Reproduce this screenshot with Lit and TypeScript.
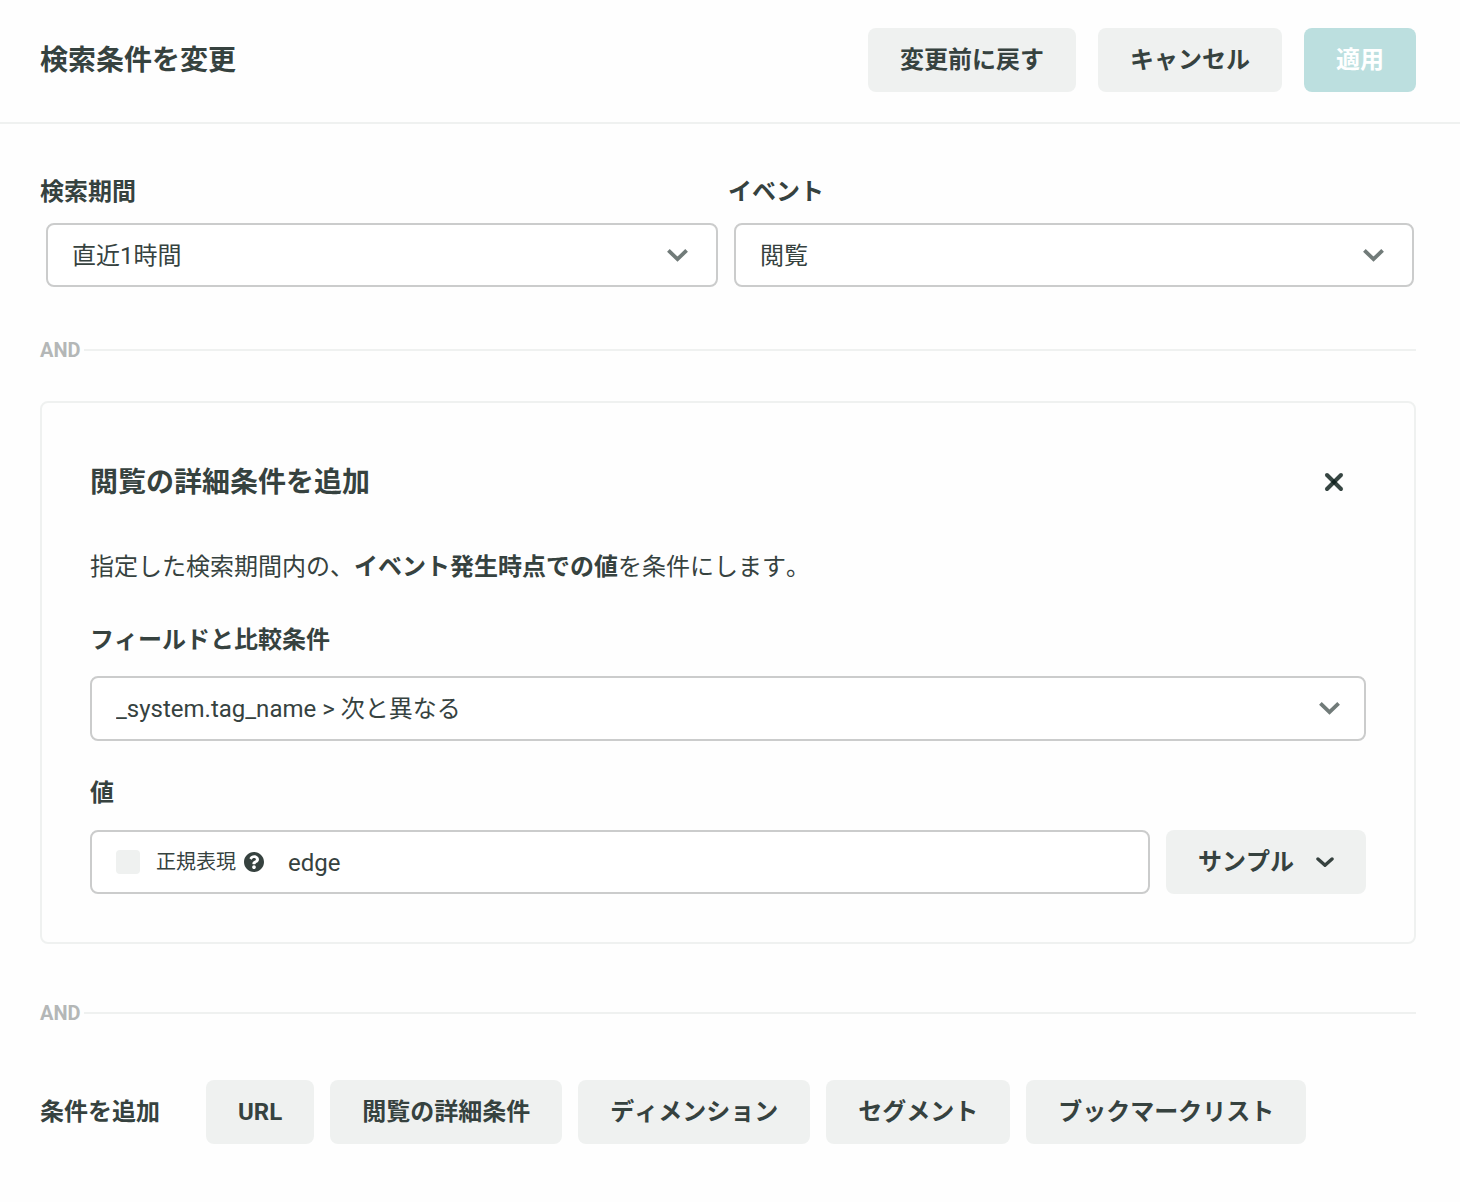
import { LitElement, html, css, svg } from "lit";
import { customElement, property } from "lit/decorators.js";

const chevron = svg`<path d="M1.4 2.4 L10.5 11.2 L19.6 2.4" fill="none" stroke="currentColor" stroke-width="3.8"/>`;

@customElement("select-box")
class SelectBox extends LitElement {
  @property() label = "";
  @property({ type: Array }) options: string[] = [];

  static styles = css`
    :host { display: block; }
    .label {
      display: block;
      margin-bottom: var(--label-gap, 15px);
      font-size: 24px;
      font-weight: 700;
      line-height: 32px;
    }
    .box {
      position: relative;
      margin: var(--box-margin, 0);
    }
    .select {
      display: block;
      width: 100%;
      height: var(--box-height, 64px);
      box-sizing: border-box;
      padding: var(--text-drop, 2px) 72px 0 24px;
      border: 2px solid #cbcccc;
      border-radius: 8px;
      background: #fff;
      color: inherit;
      font: inherit;
      font-size: 24px;
      font-kerning: inherit;
      appearance: none;
    }
    .arrow {
      position: absolute;
      top: 25px;
      right: var(--arrow-right, 30px);
      width: 21px;
      height: 14px;
      color: #717b79;
      pointer-events: none;
    }
  `;

  render() {
    return html`
      <label class="label" for="field">${this.label}</label>
      <div class="box">
        <select class="select" id="field">
          ${this.options.map((o) => html`<option>${o}</option>`)}
        </select>
        <svg class="arrow" viewBox="0 0 21 14" aria-hidden="true">${chevron}</svg>
      </div>
    `;
  }
}

@customElement("and-divider")
class AndDivider extends LitElement {
  static styles = css`
    :host {
      display: flex;
      align-items: center;
      gap: 3px;
      color: #b4b7b7;
      font-size: 20px;
      font-weight: 700;
      font-kerning: normal;
      line-height: 24px;
    }
    .line {
      flex: 1;
      height: 2px;
      background: #eff1f0;
    }
  `;

  render() {
    return html`<span>AND</span><span class="line"></span>`;
  }
}

@customElement("app-root")
class AppRoot extends LitElement {
  private conditions = ["URL", "閲覧の詳細条件", "ディメンション", "セグメント", "ブックマークリスト"];

  static styles = css`
    :host {
      display: block;
      min-height: 100vh;
      background: #fefefe;
      color: #36423f;
      font-family: Roboto, "Noto Sans CJK JP", sans-serif;
      font-size: 24px;
      font-kerning: none;
      line-height: 32px;
    }
    .header {
      display: flex;
      align-items: center;
      justify-content: space-between;
      padding: 28px 44px 30px 40px;
      border-bottom: 2px solid #eff1f0;
    }
    .title {
      margin: 0;
      padding-top: 2px;
      font-size: 28px;
      font-weight: 700;
      line-height: 40px;
    }
    .actions { display: flex; gap: 22px; }
    .button {
      display: flex;
      align-items: center;
      height: 64px;
      padding: 0 32px;
      border: 0;
      border-radius: 8px;
      background: #eff1f0;
      color: inherit;
      font: inherit;
      font-weight: 700;
      font-kerning: inherit;
      white-space: nowrap;
    }
    .primary { background: #bcdfdf; color: #fff; }
    .content { padding: 52px 44px 56px 40px; }
    .fields {
      display: grid;
      grid-template-columns: 1fr 1fr;
    }
    .period { --box-margin: 0 10px 0 6px; }
    .event { --box-margin: 0 2px 0 6px; }
    .joint-top { margin: 51px 0 39px; }
    .joint-bottom { margin: 57px 0 55px; }
    .card {
      padding: 48px;
      border: 2px solid #eff1f0;
      border-radius: 8px;
    }
    .card-head {
      display: flex;
      align-items: center;
      justify-content: space-between;
    }
    .close {
      display: grid;
      place-items: center;
      width: 64px;
      height: 62px;
      padding: 0;
      border: 0;
      background: none;
      color: #0a1c18;
    }
    .close-icon { width: 20px; height: 20px; }
    .note { margin: 38px 0 41px; }
    .condition {
      --label-gap: 20px;
      --box-height: 65px;
      --text-drop: 0;
      --arrow-right: 26px;
    }
    .value-label {
      display: block;
      margin: 36px 0 21px;
      font-weight: 700;
    }
    .value-row { display: flex; gap: 16px; }
    .value-box {
      display: flex;
      flex: 1;
      align-items: center;
      height: 64px;
      box-sizing: border-box;
      padding: 0 24px;
      border: 2px solid #cbcccc;
      border-radius: 8px;
      background: #fff;
    }
    .check {
      width: 24px;
      height: 24px;
      margin: 0 16px 0 0;
      border-radius: 4px;
      background: #eff1f0;
      appearance: none;
    }
    .check:checked { background: #7cc4c4; }
    .check-label { font-size: 20px; }
    .help { width: 20px; height: 20px; margin: 0 24px 0 8px; }
    .value {
      flex: 1;
      min-width: 0;
      padding: 2px 0 0;
      border: 0;
      outline: 0;
      background: none;
      color: inherit;
      font: inherit;
    }
    .sample { gap: 22px; }
    .sample-icon { width: 18px; height: 12px; }
    .add-row {
      display: flex;
      flex-wrap: wrap;
      align-items: center;
      gap: 16px;
    }
    .add-title {
      margin: 0 30px 0 0;
      font-size: 24px;
      font-weight: 700;
    }
  `;

  render() {
    return html`
      <header class="header">
        <h1 class="title">検索条件を変更</h1>
        <div class="actions">
          <button class="button">変更前に戻す</button>
          <button class="button">キャンセル</button>
          <button class="button primary">適用</button>
        </div>
      </header>
      <main class="content">
        <div class="fields">
          <select-box class="period" label="検索期間" .options=${["直近1時間"]}></select-box>
          <select-box class="event" label="イベント" .options=${["閲覧"]}></select-box>
        </div>
        <and-divider class="joint-top"></and-divider>
        <section class="card">
          <div class="card-head">
            <h2 class="title">閲覧の詳細条件を追加</h2>
            <button class="close" aria-label="閉じる">
              <svg class="close-icon" viewBox="0 0 20 20" aria-hidden="true">
                <g stroke="currentColor" stroke-width="4" stroke-linecap="round" stroke-opacity="0.82">
                  <path d="M3 3 L17 17" />
                  <path d="M17 3 L3 17" />
                </g>
              </svg>
            </button>
          </div>
          <p class="note">指定した検索期間内の、<b>イベント発生時点での値</b>を条件にします。</p>
          <select-box
            class="condition"
            label="フィールドと比較条件"
            .options=${["_system.tag_name > 次と異なる"]}
          ></select-box>
          <label class="value-label" for="value">値</label>
          <div class="value-row">
            <div class="value-box">
              <input class="check" type="checkbox" id="regex" />
              <label class="check-label" for="regex">正規表現</label>
              <svg class="help" viewBox="8 8 496 496" aria-hidden="true">
                <path fill="currentColor" d="M504 256c0 136.997-111.043 248-248 248S8 392.997 8 256C8 119.083 119.043 8 256 8s248 111.083 248 248zM262.655 90c-54.497 0-89.255 22.957-116.549 63.758-3.536 5.286-2.353 12.415 2.715 16.258l34.699 26.31c5.205 3.947 12.621 3.008 16.665-2.122 17.864-22.658 30.113-35.797 57.303-35.797 20.429 0 45.698 13.148 45.698 32.958 0 14.976-12.363 22.667-32.534 33.976C247.128 238.528 216 254.941 216 296v4c0 6.627 5.373 12 12 12h56c6.627 0 12-5.373 12-12v-1.333c0-28.462 83.186-29.647 83.186-106.667 0-58.002-60.165-102-116.531-102zM256 338c-25.365 0-46 20.635-46 46 0 25.364 20.635 46 46 46s46-20.636 46-46c0-25.365-20.635-46-46-46z" />
              </svg>
              <input class="value" id="value" type="text" value="edge" />
            </div>
            <button class="button sample">
              サンプル
              <svg class="sample-icon" viewBox="0 0 18 12" aria-hidden="true">
                <path d="M2 3 L9 9.2 L16 3" fill="none" stroke="currentColor" stroke-width="3.4"
                  stroke-linecap="round" stroke-linejoin="round" />
              </svg>
            </button>
          </div>
        </section>
        <and-divider class="joint-bottom"></and-divider>
        <div class="add-row">
          <h2 class="add-title">条件を追加</h2>
          ${this.conditions.map((c) => html`<button class="button">${c}</button>`)}
        </div>
      </main>
    `;
  }
}
